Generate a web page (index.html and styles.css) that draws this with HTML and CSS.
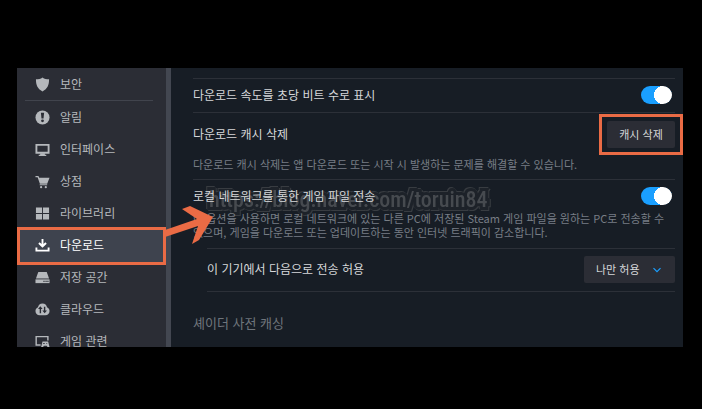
FILE: index.html
```html
<!DOCTYPE html>
<html lang="ko">
<head>
  <meta charset="UTF-8" />
  <meta name="viewport" content="width=device-width, initial-scale=1.0" />
  <title>다운로드 설정</title>
  <link rel="stylesheet" href="styles.css">
</head>
<body>
  <div class="settings">
    <nav class="sidebar">
      <a href="#security">
        <svg viewBox="0 0 16 16"><path d="M8 .5c2 1.500 4.200 2 7 2 0 6-1.500 10-7 13C2.500 12.500 1 8.500 1 2.500c2.800 0 5-.5 7-2z"/></svg>
        <span>보안</span>
      </a>
      <hr>
      <a href="#notifications">
        <svg viewBox="0 0 16 16"><circle cx="8" cy="8" r="7.500"/><path class="cut" d="M6.300 3h3.400l-.6 6H6.900z"/><circle class="cut" cx="8" cy="11.500" r="1.500"/></svg>
        <span>알림</span>
      </a>
      <a href="#interface">
        <svg viewBox="0 0 16 16"><path class="line" d="M1.500 3h13v8.500h-13z"/><path d="M5.500 12h5v1.500H12V15H4v-1.500h1.500z"/></svg>
        <span>인터페이스</span>
      </a>
      <a href="#store">
        <svg viewBox="0 0 16 16"><path d="M.5 2h3.200l.8 2H15.500l-2.500 6.500H5.200L2.800 3.500H.5zM5 11h8v1H5z"/><circle cx="6.500" cy="14" r="1.200"/><circle cx="11.500" cy="14" r="1.200"/></svg>
        <span>상점</span>
      </a>
      <a href="#library">
        <svg viewBox="0 0 16 16"><path d="M1 1.500h6.500v6H1zM8.500 1.500H15v6H8.500zM1 8.500h6.500v6H1zM8.500 8.500H15v6H8.500z"/></svg>
        <span>라이브러리</span>
      </a>
      <a href="#downloads" class="active">
        <svg viewBox="0 0 16 16"><path d="M7 1h2v5.500l2-2L12.500 6 8 10.500 3.500 6 5 4.500l2 2zM.5 10h2v2.500h11V10h2v4.500H.5z"/></svg>
        <span>다운로드</span>
      </a>
      <a href="#storage">
        <svg viewBox="0 0 16 16"><path d="M3.500 2h9L15 9H1z"/><path d="M.5 10h15v4H.5z"/><path class="cut" d="M9 11.500h1.200v1.200H9zM11.200 11.500h1.200v1.200h-1.200zM13.200 11.500h1.200v1.200h-1.200z"/></svg>
        <span>저장 공간</span>
      </a>
      <a href="#cloud">
        <svg viewBox="0 0 16 16"><path d="M8 1.500c2.800 0 4.300 1.800 4.800 4 1.700.7 2.700 2.200 2.700 4 0 2.700-1.800 4.500-4.500 4.500H5C2.300 14 .5 12.200.5 9.500c0-1.800 1-3.300 2.700-4 .5-2.200 2-4 4.800-4z"/><path class="cut" d="M5.700 4.500 8.200 7.500H6.500V12H5V7.500H3.200zM9.500 5H11v4h1.800l-2.500 3-2.500-3h1.700z"/></svg>
        <span>클라우드</span>
      </a>
      <a href="#ingame">
        <svg viewBox="0 0 16 16"><path d="M.5 2h14v5H13V3.500H2V11h4v1.500H.5z"/><path d="M8 8h6l1.500 6h-2l-1-1.500h-3l-1 1.500h-2z"/><path class="cut" d="M8.500 9.500h2v1h-2zM12 9.500h1v1h-1z"/></svg>
        <span>게임 관련</span>
      </a>
    </nav>
    <div class="scrollbar"></div>

    <main class="content">
      <section class="row">
        <label class="title" for="bits">다운로드 속도를 초당 비트 수로 표시</label>
        <input class="toggle" type="checkbox" id="bits" checked>
      </section>

      <section class="row cache">
        <span class="title">다운로드 캐시 삭제</span>
        <div class="highlight"><button type="button">캐시 삭제</button></div>
        <p>다운로드 캐시 삭제는 앱 다운로드 또는 시작 시 발생하는 문제를 해결할 수 있습니다.</p>
      </section>

      <section class="row transfer">
        <label class="title" for="lan">로컬 네트워크를 통한 게임 파일 전송</label>
        <input class="toggle" type="checkbox" id="lan" checked>
        <p>이 옵션을 사용하면 로컬 네트워크에 있는 다른 PC에 저장된 Steam 게임 파일을 원하는 PC로 전송할 수<br>있으며, 게임을 다운로드 또는 업데이트하는 동안 인터넷 트래픽이 감소합니다.</p>
      </section>

      <section class="row nested">
        <label class="title" for="allow">이 기기에서 다음으로 전송 허용</label>
        <div class="dropdown">
          <select id="allow">
            <option>나만 허용</option>
          </select>
          <svg viewBox="0 0 8 6"><path d="M1 1l3 3 3-3"/></svg>
        </div>
      </section>

      <h2>셰이더 사전 캐싱</h2>

      <div class="watermark">https://blog.naver.com/toruin84</div>
      <svg class="arrow" viewBox="0 0 50 42"><path d="M0 25 32 14 17 4 25 1 48 12 34 35 27 39 33 21 0 32z"/></svg>
    </main>
  </div>
</body>
</html>
```
FILE: styles.css
```css
* {
  box-sizing: border-box;
}
body {
  margin: 0;
  padding: 68px 19px 62px 17px;
  background-color: #000;
  color: #d6d8da;
  font-family: "Noto Sans CJK KR", sans-serif;
  font-size: 12px;
  line-height: 16px;
}
.settings {
  display: flex;
  height: calc(100vh - 130px);
  background-color: #171d25;
}
.sidebar {
  width: 149px;
  flex-shrink: 0;
  background-color: #2b2d35;
  overflow: hidden;
}
.sidebar a {
  display: flex;
  align-items: center;
  gap: 10px;
  height: 32px;
  padding-left: 18px;
  color: #b5b8bc;
  text-decoration: none;
}
.sidebar svg {
  width: 15px;
  height: 15px;
  fill: currentColor;
}
.sidebar .cut {
  fill: #2b2d35;
}
.sidebar .line {
  fill: none;
  stroke: currentColor;
  stroke-width: 2;
}
.sidebar hr {
  height: 1px;
  margin: 0 13px 0 8px;
  border: 0;
  background-color: #41444d;
}
.sidebar .active {
  height: 38px;
  margin: -2px 0 -4px;
  position: relative;
  padding: 0 0 2px 15px;
  border: 3px solid #ea6b45;
  background-color: #3e434e;
  color: #fff;
}
.scrollbar {
  width: 5px;
  flex-shrink: 0;
  background-color: #434751;
}

.content {
  position: relative;
  z-index: 0;
  flex: 1;
  padding: 10px 8px 0 22px;
}
.row {
  display: grid;
  grid-template-columns: 1fr auto;
  align-items: center;
  border-top: 1px solid #2c3038;
}
.row:first-child {
  height: 34px;
  padding-bottom: 2px;
}
.row p {
  grid-column: 1 / -1;
  margin: 0;
  color: #787e85;
  font-size: 11px;
  line-height: 14px;
}
.toggle {
  appearance: none;
  width: 31px;
  height: 18px;
  margin: 0 3px 0 0;
  border-radius: 9px;
  background: radial-gradient(circle at 22px 9px, #fff 8px, #fff 9px, transparent 9px) #1a9fff;
}
.cache {
  height: 67px;
  grid-template-rows: 42px 18px;
}
.highlight {
  margin-right: -8px;
  padding: 4px 5px;
  border: 3px solid #ea6b45;
}
button,
select {
  border: 0;
  border-radius: 2px;
  background-color: #2b2d35;
  color: #d6d8da;
  font-family: inherit;
  font-size: 11px;
}
button {
  display: block;
  width: 68px;
  height: 27px;
  padding: 0;
}
.transfer {
  height: 69px;
  grid-template-rows: 31px 28px;
}
.nested {
  height: 43px;
  margin-left: 14px;
  padding-bottom: 2px;
}
.dropdown {
  position: relative;
}
.dropdown select {
  appearance: none;
  display: block;
  width: 91px;
  height: 27px;
  padding: 0 12px;
}
.dropdown svg {
  position: absolute;
  top: 11px;
  right: 13px;
  width: 10px;
  height: 7px;
  fill: none;
  stroke: #1a9fff;
  pointer-events: none;
}
h2 {
  margin: 0 0 0 14px;
  padding-top: 23px;
  border-top: 1px solid #2c3038;
  color: #6f757c;
  font-size: 13px;
  font-weight: 400;
  text-indent: -14px;
}

/* marks lying over the page */
.watermark {
  position: absolute;
  z-index: -1;
  top: 118px;
  left: 38px;
  color: #464a4f;
  font-family: "Roboto Condensed", Roboto, sans-serif;
  font-size: 22px;
  font-weight: 500;
  line-height: 28px;
  white-space: nowrap;
  -webkit-text-stroke: 6px #1d2229;
  paint-order: stroke fill;
  filter: drop-shadow(1px 1px 0 #383c41) drop-shadow(-1px -1px 0 #383c41);
}
.arrow {
  position: absolute;
  top: 137px;
  left: -6px;
  width: 50px;
  height: 42px;
  fill: #ea6b45;
  pointer-events: none;
}
```
